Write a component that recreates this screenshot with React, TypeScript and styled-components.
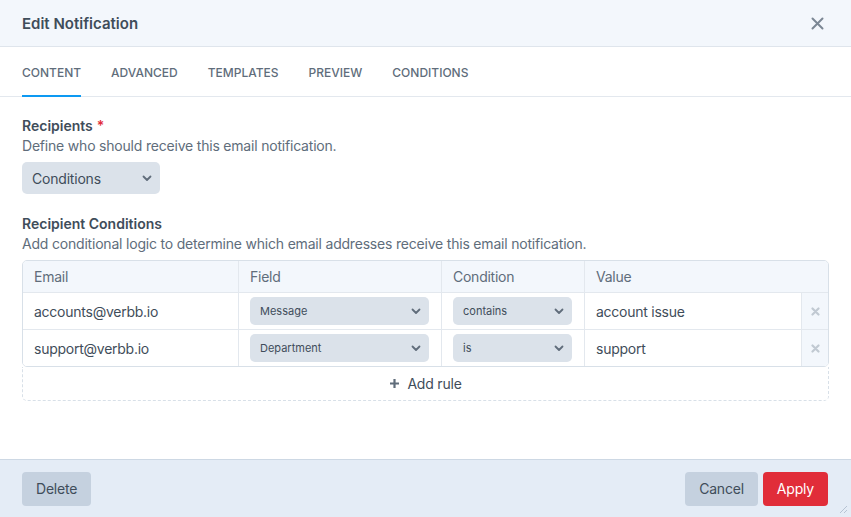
import React from "react";
import styled, { createGlobalStyle } from "styled-components";

const GlobalStyle = createGlobalStyle`
  html, body {
    margin: 0;
    padding: 0;
    background: #ffffff;
  }
  body {
    font-family: Inter, "Noto Sans", sans-serif;
    color: #3f4d5a;
  }
  * {
    box-sizing: border-box;
  }
`;

const Modal = styled.div`
  width: 851px;
  height: 517px;
  display: flex;
  flex-direction: column;
  background: #ffffff;
  overflow: hidden;
  position: relative;
`;

const Header = styled.div`
  height: 47px;
  flex: none;
  display: flex;
  align-items: center;
  justify-content: space-between;
  padding: 0 27px 0 22px;
  background: #f3f7fc;
  border-bottom: 1px solid #dfe5ec;
`;

const Title = styled.h2`
  margin: 0;
  font-size: 15px;
  font-weight: 600;
  color: #3f4d5a;
`;

const CloseButton = styled.button`
  border: 0;
  background: none;
  padding: 0;
  display: flex;
  color: #7b8794;
  cursor: pointer;
`;

const Tabs = styled.div`
  height: 50px;
  flex: none;
  display: flex;
  gap: 30px;
  padding: 0 22px;
  border-bottom: 1px solid #e3e8ee;
`;

const Tab = styled.div<{ $active?: boolean }>`
  display: flex;
  align-items: center;
  padding-top: 2px;
  font-size: 12px;
  font-weight: 500;
  text-transform: uppercase;
  color: #606d7b;
  border-bottom: 2px solid ${(p) => (p.$active ? "#0d99f2" : "transparent")};
  margin-bottom: -1px;
`;

const Body = styled.div`
  flex: 1;
  padding: 19px 22px 0;
`;

const Field = styled.div`
  margin-bottom: 20px;
`;

const Label = styled.div`
  font-size: 14px;
  font-weight: 600;
  color: #3f4d5a;
  line-height: 20px;
`;

const Required = styled.span`
  color: #e12d39;
  margin-left: 4px;
`;

const Instructions = styled.div`
  font-size: 14px;
  letter-spacing: -0.2px;
  color: #606d7b;
  line-height: 20px;
  margin-bottom: 6px;
`;

const Select = styled.div<{ $small?: boolean }>`
  display: flex;
  align-items: center;
  justify-content: space-between;
  height: ${(p) => (p.$small ? "28px" : "32px")};
  width: ${(p) => (p.$small ? "100%" : "138px")};
  padding: 0 8px 0 10px;
  background: #dbe2ea;
  border-radius: 5px;
  font-size: ${(p) => (p.$small ? "11px" : "14px")};
  letter-spacing: ${(p) => (p.$small ? "0" : "-0.2px")};
  color: #3f4d5a;
`;

const Table = styled.div`
  border: 1px solid #d8e0e8;
  border-radius: 5px;
  overflow: hidden;
`;

const Row = styled.div<{ $head?: boolean }>`
  display: grid;
  grid-template-columns: 215px 203px 143px 1fr 27px;
  height: ${(p) => (p.$head ? "31px" : "37px")};
  background: ${(p) => (p.$head ? "#f3f7fc" : "#ffffff")};
  border-top: ${(p) => (p.$head ? "0" : "1px solid #e3e8ee")};
`;

const Cell = styled.div<{ $head?: boolean }>`
  display: flex;
  align-items: center;
  padding: 0 12px 0 11px;
  font-size: 14px;
  letter-spacing: -0.25px;
  color: ${(p) => (p.$head ? "#606d7b" : "#3f4d5a")};
  & + & {
    border-left: ${(p) => (p.$head ? "0" : "1px solid #e3e8ee")};
  }
`;

const RemoveCell = styled.div`
  display: flex;
  align-items: center;
  justify-content: center;
  background: #f3f7fc;
  border-left: 1px solid #e3e8ee;
  color: #c1c9d2;
`;

const AddRule = styled.div`
  height: 34px;
  display: flex;
  align-items: center;
  justify-content: center;
  gap: 7px;
  border: 1px dashed #d8e0e8;
  border-top: 0;
  border-radius: 0 0 5px 5px;
  font-size: 14px;
  letter-spacing: -0.2px;
  color: #3f4d5a;
`;

const Footer = styled.div`
  height: 58px;
  flex: none;
  display: flex;
  align-items: center;
  padding: 0 23px 0 22px;
  gap: 5px;
  background: #e4ecf6;
  border-top: 1px solid #cdd8e4;
  position: relative;
`;

const Spacer = styled.div`
  flex: 1;
`;

const Button = styled.button<{ $primary?: boolean }>`
  height: 34px;
  padding: 0 14px;
  border: 0;
  border-radius: 4px;
  font-family: inherit;
  font-size: 14px;
  letter-spacing: -0.2px;
  background: ${(p) => (p.$primary ? "#e12d39" : "#c5d1df")};
  color: ${(p) => (p.$primary ? "#ffffff" : "#3f4d5a")};
  cursor: pointer;
`;

const Grip = styled.svg`
  position: absolute;
  right: 3px;
  bottom: 3px;
`;

const Chevron = ({ size = 10 }: { size?: number }) => (
  <svg width={size} height={size * 0.7} viewBox="0 0 10 7" fill="none">
    <path d="M1.5 1.5L5 5L8.5 1.5" stroke="#606d7b" strokeWidth="1.8" strokeLinecap="round" strokeLinejoin="round" />
  </svg>
);

const rules = [
  { email: "accounts@verbb.io", field: "Message", condition: "contains", value: "account issue" },
  { email: "support@verbb.io", field: "Department", condition: "is", value: "support" },
];

const tabs = ["Content", "Advanced", "Templates", "Preview", "Conditions"];

export default function App() {
  return (
    <Modal>
      <GlobalStyle />
      <Header>
        <Title>Edit Notification</Title>
        <CloseButton>
          <svg width="13" height="13" viewBox="0 0 13 13">
            <path d="M1.5 1.5L11.5 11.5M11.5 1.5L1.5 11.5" stroke="currentColor" strokeWidth="2" strokeLinecap="round" />
          </svg>
        </CloseButton>
      </Header>
      <Tabs>
        {tabs.map((t, i) => (
          <Tab key={t} $active={i === 0}>
            {t}
          </Tab>
        ))}
      </Tabs>
      <Body>
        <Field>
          <Label>
            Recipients<Required>*</Required>
          </Label>
          <Instructions>Define who should receive this email notification.</Instructions>
          <Select>
            Conditions
            <Chevron />
          </Select>
        </Field>
        <Field>
          <Label>Recipient Conditions</Label>
          <Instructions>
            Add conditional logic to determine which email addresses receive this email notification.
          </Instructions>
          <Table>
            <Row $head>
              <Cell $head>Email</Cell>
              <Cell $head>Field</Cell>
              <Cell $head>Condition</Cell>
              <Cell $head>Value</Cell>
              <div />
            </Row>
            {rules.map((r) => (
              <Row key={r.email}>
                <Cell>{r.email}</Cell>
                <Cell>
                  <Select $small>
                    {r.field}
                    <Chevron />
                  </Select>
                </Cell>
                <Cell>
                  <Select $small>
                    {r.condition}
                    <Chevron />
                  </Select>
                </Cell>
                <Cell>{r.value}</Cell>
                <RemoveCell>
                  <svg width="9" height="9" viewBox="0 0 9 9">
                    <path d="M1.5 1.5L7.5 7.5M7.5 1.5L1.5 7.5" stroke="currentColor" strokeWidth="2.2" strokeLinecap="round" />
                  </svg>
                </RemoveCell>
              </Row>
            ))}
          </Table>
          <AddRule>
            <svg width="11" height="11" viewBox="0 0 11 11">
              <path d="M5.5 1v9M1 5.5h9" stroke="#606d7b" strokeWidth="2.2" />
            </svg>
            Add rule
          </AddRule>
        </Field>
      </Body>
      <Footer>
        <Button>Delete</Button>
        <Spacer />
        <Button>Cancel</Button>
        <Button $primary>Apply</Button>
        <Grip width="10" height="10" viewBox="0 0 10 10">
          <path d="M9 2L2 9M9 6L6 9" stroke="#b6c3d3" strokeWidth="1" />
        </Grip>
      </Footer>
    </Modal>
  );
}
